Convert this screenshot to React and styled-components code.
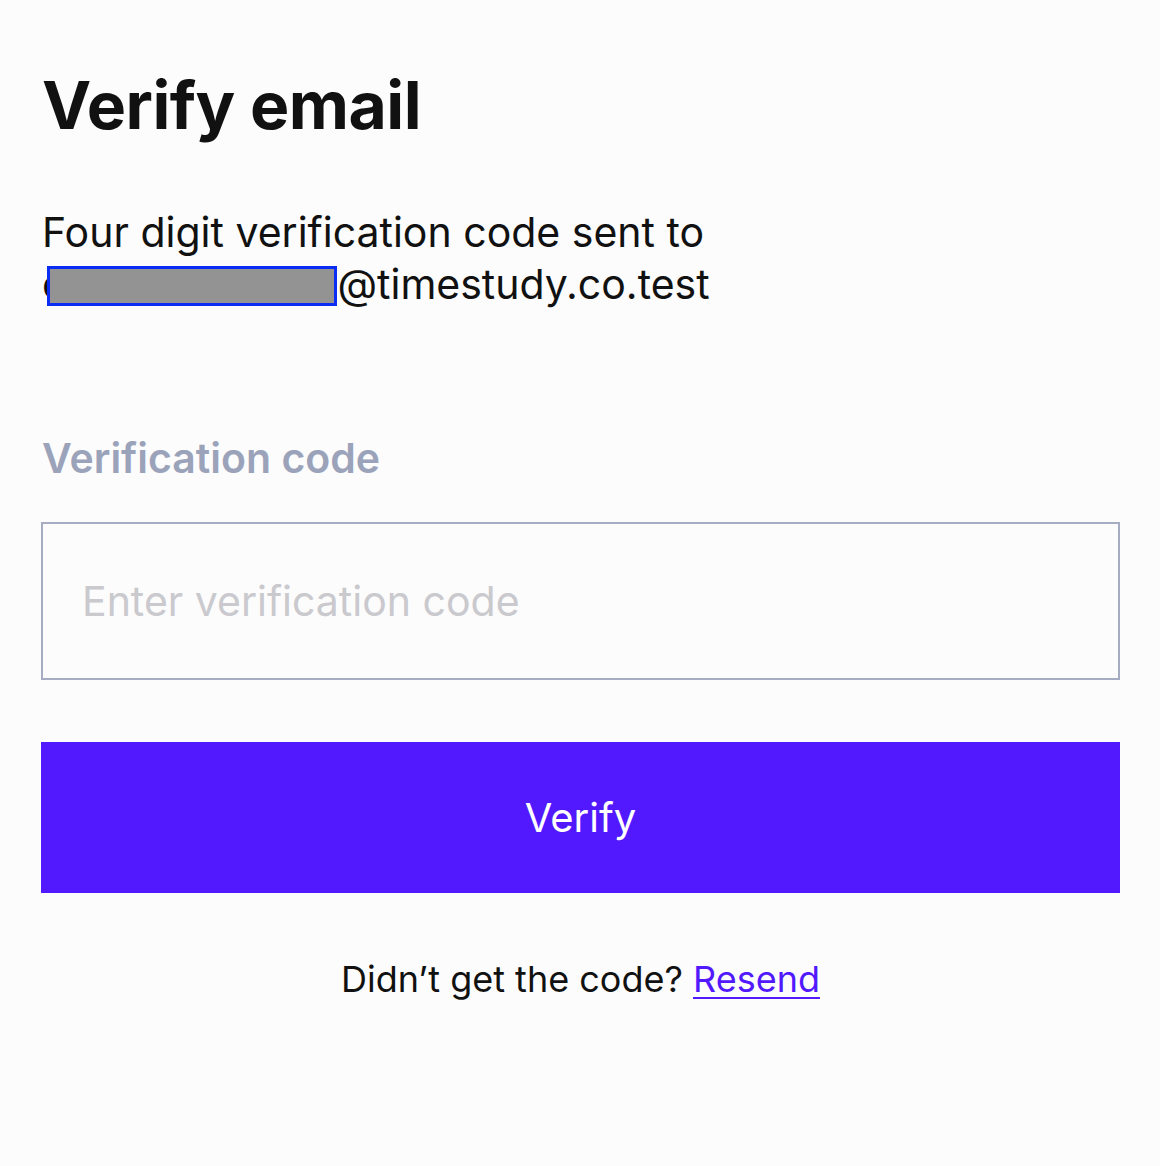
import styled, { createGlobalStyle } from "styled-components";

const GlobalStyle = createGlobalStyle`
  html, body {
    margin: 0;
    padding: 0;
    background: #fcfcfc;
  }
  body {
    font-family: Inter, "Noto Sans", "Liberation Sans", sans-serif;
    color: #111;
  }
`;

const Screen = styled.main`
  min-height: 1166px;
  box-sizing: border-box;
  padding: 60px 40px 0 41px;
  display: flex;
  flex-direction: column;
`;

const Title = styled.h1`
  margin: 0 0 0 1px;
  font-size: 66px;
  font-weight: 700;
  letter-spacing: -0.5px;
  line-height: 90px;
  color: #111;
`;

const Intro = styled.p`
  margin: 56px 0 0 1px;
  font-size: 41px;
  line-height: 52px;
  font-weight: 400;
  color: #111;
`;

const Redaction = styled.span`
  display: inline-block;
  vertical-align: -7px;
  width: 284px;
  height: 34px;
  margin-left: -18px;
  background: #939393;
  border: 3px solid #0a2cf5;
`;

const Field = styled.label`
  display: flex;
  flex-direction: column;
  margin-top: 124px;
  gap: 40px;
`;

const FieldLabel = styled.span`
  margin-left: 1px;
  font-size: 41px;
  font-weight: 600;
  line-height: 48px;
  color: #9ba3ba;
`;

const CodeInput = styled.input`
  box-sizing: border-box;
  width: 100%;
  height: 158px;
  border: 2px solid #a6adc3;
  border-radius: 0;
  background: #fcfcfc;
  padding: 0 39px;
  font-family: inherit;
  font-size: 41px;
  color: #111;
  outline: none;
  &::placeholder {
    color: #c9c9ce;
  }
`;

const PrimaryButton = styled.button`
  margin-top: 62px;
  width: 100%;
  height: 151px;
  border: none;
  border-radius: 0;
  background: #5219ff;
  color: #fff;
  font-family: inherit;
  font-size: 40px;
  font-weight: 400;
  cursor: pointer;
`;

const Footer = styled.p`
  margin: 64px 0 0;
  text-align: center;
  font-size: 36px;
  line-height: 44px;
  color: #111;
`;

const ResendLink = styled.a`
  color: #5219ff;
  text-decoration: underline;
  text-underline-offset: 5px;
  text-decoration-thickness: 2px;
`;

const App = () => {
  return (
    <>
      <GlobalStyle />
      <Screen>
        <Title>Verify email</Title>
        <Intro>
          Four digit verification code sent to
          <br />c<Redaction />@timestudy.co.test
        </Intro>
        <Field>
          <FieldLabel>Verification code</FieldLabel>
          <CodeInput type="text" placeholder="Enter verification code" />
        </Field>
        <PrimaryButton type="button">Verify</PrimaryButton>
        <Footer>
          Didn’t get the code? <ResendLink href="#">Resend</ResendLink>
        </Footer>
      </Screen>
    </>
  );
};

export default App;
